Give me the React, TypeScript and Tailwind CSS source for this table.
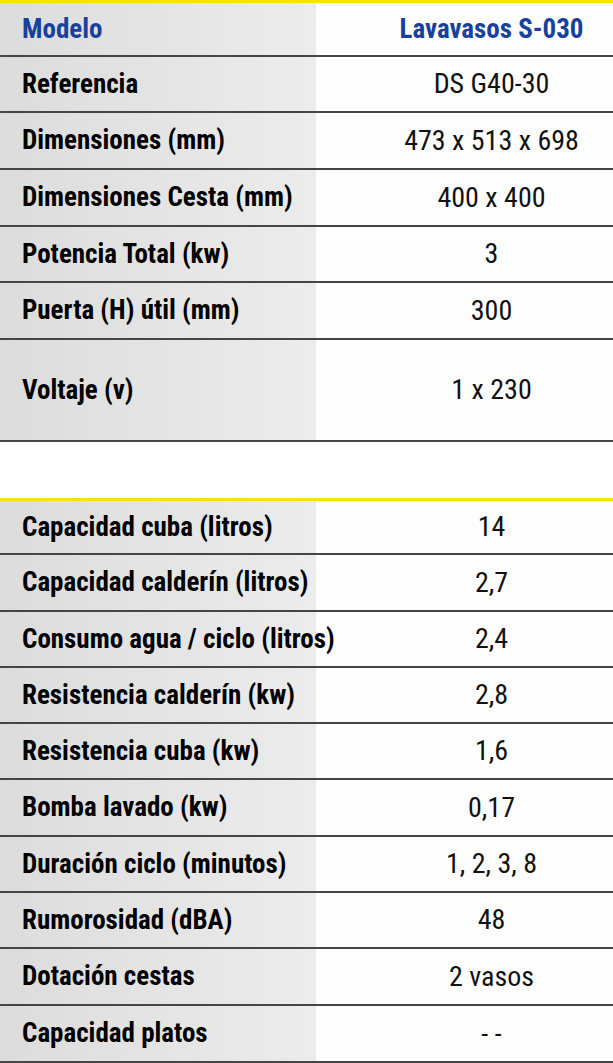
const topRows = [
  { label: "Referencia", value: "DS G40-30", h: "h-[56px]" },
  { label: "Dimensiones (mm)", value: "473 x 513 x 698", h: "h-[57px]" },
  { label: "Dimensiones Cesta (mm)", value: "400 x 400", h: "h-[57px]" },
  { label: "Potencia Total (kw)", value: "3", h: "h-[56px]" },
  { label: "Puerta (H) útil (mm)", value: "300", h: "h-[57px]" },
  { label: "Voltaje (v)", value: "1 x 230", h: "h-[102px]" },
];

const bottomRows = [
  { label: "Capacidad cuba (litros)", value: "14", h: "h-[57px]" },
  { label: "Capacidad calderín (litros)", value: "2,7", h: "h-[57px]" },
  { label: "Consumo agua / ciclo (litros)", value: "2,4", h: "h-[56px]" },
  { label: "Resistencia calderín (kw)", value: "2,8", h: "h-[56px]" },
  { label: "Resistencia cuba (kw)", value: "1,6", h: "h-[56px]" },
  { label: "Bomba lavado (kw)", value: "0,17", h: "h-[57px]" },
  { label: "Duración ciclo (minutos)", value: "1, 2, 3, 8", h: "h-[56px]" },
  { label: "Rumorosidad (dBA)", value: "48", h: "h-[56px]" },
  { label: "Dotación cestas", value: "2 vasos", h: "h-[57px]" },
  { label: "Capacidad platos", value: "- -", h: "h-[57px]" },
];

type Row = { label: string; value: string; h: string };

function SpecRow({ row, first }: { row: Row; first?: boolean }) {
  return (
    <div
      className={`flex ${row.h} border-b-2 border-[#454545] ${
        first ? "border-t-[3px] border-t-[#ffe100]" : ""
      }`}
    >
      <div className="relative z-10 flex w-[316px] shrink-0 items-center whitespace-nowrap bg-gradient-to-r from-[#dcdcdc] to-[#ececec] pl-[22px] text-[27px] font-bold text-black">
        {row.label}
      </div>
      <div className="flex flex-1 items-center justify-center whitespace-nowrap bg-[#fdfdfd] pl-[54px] text-[28px] text-[#111]">
        {row.value}
      </div>
    </div>
  );
}

export default function App() {
  return (
    <div className="w-[613px] bg-white font-['Roboto',sans-serif] [font-stretch:75%]">
      <div className="flex h-[57px] border-t-[3px] border-b-2 border-[#454545] border-t-[#ffe100]">
        <div className="flex w-[316px] shrink-0 items-center bg-gradient-to-r from-[#dcdcdc] to-[#ececec] pl-[22px] text-[27px] font-bold text-[#17419a]">
          Modelo
        </div>
        <div className="flex flex-1 items-center justify-center bg-[#fdfdfd] pl-[54px] text-[27px] font-bold text-[#17419a]">
          Lavavasos S-030
        </div>
      </div>
      {topRows.map((row) => (
        <SpecRow key={row.label} row={row} />
      ))}
      <div className="h-[56px] bg-white" />
      {bottomRows.map((row, i) => (
        <SpecRow key={row.label} row={row} first={i === 0} />
      ))}
    </div>
  );
}
